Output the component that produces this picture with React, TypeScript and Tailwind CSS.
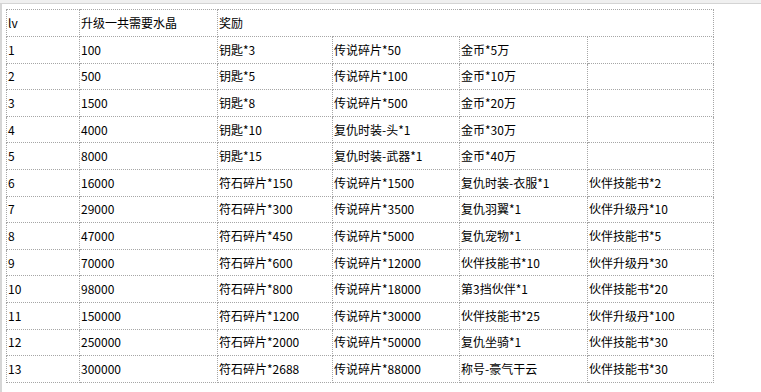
const rows: [string, string, string, string, string, string][] = [
  ["1", "100", "钥匙*3", "传说碎片*50", "金币*5万", ""],
  ["2", "500", "钥匙*5", "传说碎片*100", "金币*10万", ""],
  ["3", "1500", "钥匙*8", "传说碎片*500", "金币*20万", ""],
  ["4", "4000", "钥匙*10", "复仇时装-头*1", "金币*30万", ""],
  ["5", "8000", "钥匙*15", "复仇时装-武器*1", "金币*40万", ""],
  ["6", "16000", "符石碎片*150", "传说碎片*1500", "复仇时装-衣服*1", "伙伴技能书*2"],
  ["7", "29000", "符石碎片*300", "传说碎片*3500", "复仇羽翼*1", "伙伴升级丹*10"],
  ["8", "47000", "符石碎片*450", "传说碎片*5000", "复仇宠物*1", "伙伴技能书*5"],
  ["9", "70000", "符石碎片*600", "传说碎片*12000", "伙伴技能书*10", "伙伴升级丹*30"],
  ["10", "98000", "符石碎片*800", "传说碎片*18000", "第3挡伙伴*1", "伙伴技能书*20"],
  ["11", "150000", "符石碎片*1200", "传说碎片*30000", "伙伴技能书*25", "伙伴升级丹*100"],
  ["12", "250000", "符石碎片*2000", "传说碎片*50000", "复仇坐骑*1", "伙伴技能书*30"],
  ["13", "300000", "符石碎片*2688", "传说碎片*88000", "称号-豪气干云", "伙伴技能书*30"],
];

const cell = "border border-dotted border-[#a6a6a6] px-px py-0 align-middle whitespace-nowrap";

export default function App() {
  return (
    <div className="flex h-[392px] w-[761px] flex-col bg-white text-[12px] text-black [font-family:'Noto_Sans_CJK_SC','Liberation_Sans',sans-serif]">
      <div className="h-[4px] border-b border-[#d4d4d4] bg-[#f0f0f0]" />
      <div className="flex-1 border-l-2 border-[#d6d6d6] pl-[4px] pt-[5px]">
        <table className="table-fixed border-collapse">
          <colgroup>
            <col className="w-[73px]" />
            <col className="w-[138px]" />
            <col className="w-[115px]" />
            <col className="w-[127px]" />
            <col className="w-[128px]" />
            <col className="w-[126px]" />
          </colgroup>
          <tbody>
            <tr className="h-[27px]">
              <td className={cell}>lv</td>
              <td className={cell}>升级一共需要水晶</td>
              <td className={cell} colSpan={4}>奖励</td>
            </tr>
            {rows.map((r) => (
              <tr key={r[0]} className="h-[26.6px]">
                {r.map((c, i) => (
                  <td key={i} className={cell}>{c}</td>
                ))}
              </tr>
            ))}
          </tbody>
        </table>
      </div>
    </div>
  );
}
